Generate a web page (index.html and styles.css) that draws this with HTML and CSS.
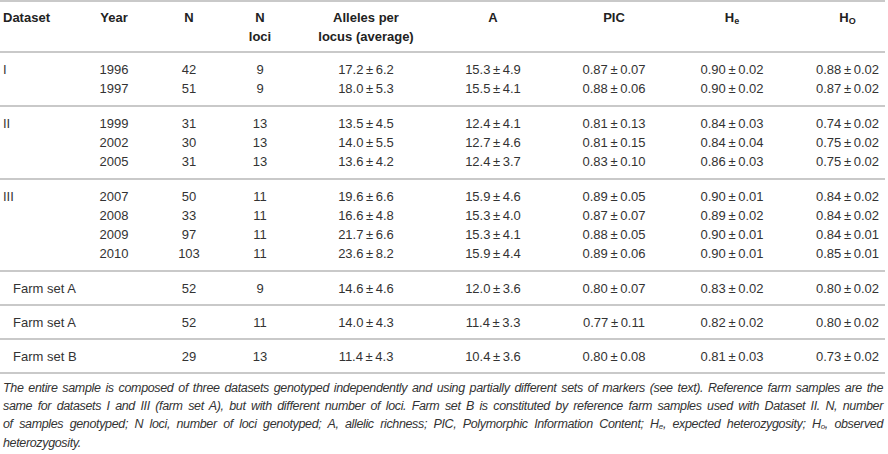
FILE: index.html
```html
<!DOCTYPE html>
<html lang="en">
<head>
    <meta charset="UTF-8">
    <title>Genetic diversity by dataset</title>
    <link rel="stylesheet" href="styles.css">
</head>
<body>
    <div class="table-wrap">
        <table class="data-table">
            <colgroup>
                <col class="c-dataset">
                <col class="c-year">
                <col class="c-n">
                <col class="c-loci">
                <col class="c-alleles">
                <col class="c-a">
                <col class="c-pic">
                <col class="c-he">
                <col class="c-ho">
            </colgroup>
            <thead>
                <tr>
                    <th class="left">Dataset</th>
                    <th>Year</th>
                    <th>N</th>
                    <th>N<br>loci</th>
                    <th>Alleles per<br>locus (average)</th>
                    <th>A</th>
                    <th>PIC</th>
                    <th>H<sub>e</sub></th>
                    <th class="last">H<sub>O</sub></th>
                </tr>
            </thead>

            <!-- Dataset I -->
            <tbody class="group">
                <tr><td class="left">I</td><td>1996</td><td>42</td><td>9</td><td>17.2&thinsp;±&thinsp;6.2</td><td>15.3&thinsp;±&thinsp;4.9</td><td>0.87&thinsp;±&thinsp;0.07</td><td>0.90&thinsp;±&thinsp;0.02</td><td class="last">0.88&thinsp;±&thinsp;0.02</td></tr>
                <tr><td></td><td>1997</td><td>51</td><td>9</td><td>18.0&thinsp;±&thinsp;5.3</td><td>15.5&thinsp;±&thinsp;4.1</td><td>0.88&thinsp;±&thinsp;0.06</td><td>0.90&thinsp;±&thinsp;0.02</td><td class="last">0.87&thinsp;±&thinsp;0.02</td></tr>
            </tbody>

            <!-- Dataset II -->
            <tbody class="group">
                <tr><td class="left">II</td><td>1999</td><td>31</td><td>13</td><td>13.5&thinsp;±&thinsp;4.5</td><td>12.4&thinsp;±&thinsp;4.1</td><td>0.81&thinsp;±&thinsp;0.13</td><td>0.84&thinsp;±&thinsp;0.03</td><td class="last">0.74&thinsp;±&thinsp;0.02</td></tr>
                <tr><td></td><td>2002</td><td>30</td><td>13</td><td>14.0&thinsp;±&thinsp;5.5</td><td>12.7&thinsp;±&thinsp;4.6</td><td>0.81&thinsp;±&thinsp;0.15</td><td>0.84&thinsp;±&thinsp;0.04</td><td class="last">0.75&thinsp;±&thinsp;0.02</td></tr>
                <tr><td></td><td>2005</td><td>31</td><td>13</td><td>13.6&thinsp;±&thinsp;4.2</td><td>12.4&thinsp;±&thinsp;3.7</td><td>0.83&thinsp;±&thinsp;0.10</td><td>0.86&thinsp;±&thinsp;0.03</td><td class="last">0.75&thinsp;±&thinsp;0.02</td></tr>
            </tbody>

            <!-- Dataset III -->
            <tbody class="group">
                <tr><td class="left">III</td><td>2007</td><td>50</td><td>11</td><td>19.6&thinsp;±&thinsp;6.6</td><td>15.9&thinsp;±&thinsp;4.6</td><td>0.89&thinsp;±&thinsp;0.05</td><td>0.90&thinsp;±&thinsp;0.01</td><td class="last">0.84&thinsp;±&thinsp;0.02</td></tr>
                <tr><td></td><td>2008</td><td>33</td><td>11</td><td>16.6&thinsp;±&thinsp;4.8</td><td>15.3&thinsp;±&thinsp;4.0</td><td>0.87&thinsp;±&thinsp;0.07</td><td>0.89&thinsp;±&thinsp;0.02</td><td class="last">0.84&thinsp;±&thinsp;0.02</td></tr>
                <tr><td></td><td>2009</td><td>97</td><td>11</td><td>21.7&thinsp;±&thinsp;6.6</td><td>15.3&thinsp;±&thinsp;4.1</td><td>0.88&thinsp;±&thinsp;0.05</td><td>0.90&thinsp;±&thinsp;0.01</td><td class="last">0.84&thinsp;±&thinsp;0.01</td></tr>
                <tr><td></td><td>2010</td><td>103</td><td>11</td><td>23.6&thinsp;±&thinsp;8.2</td><td>15.9&thinsp;±&thinsp;4.4</td><td>0.89&thinsp;±&thinsp;0.06</td><td>0.90&thinsp;±&thinsp;0.01</td><td class="last">0.85&thinsp;±&thinsp;0.01</td></tr>
            </tbody>

            <!-- Reference farm samples -->
            <tbody class="farm">
                <tr><td class="farm-name" colspan="2">Farm set A</td><td>52</td><td>9</td><td>14.6&thinsp;±&thinsp;4.6</td><td>12.0&thinsp;±&thinsp;3.6</td><td>0.80&thinsp;±&thinsp;0.07</td><td>0.83&thinsp;±&thinsp;0.02</td><td class="last">0.80&thinsp;±&thinsp;0.02</td></tr>
            </tbody>
            <tbody class="farm">
                <tr><td class="farm-name" colspan="2">Farm set A</td><td>52</td><td>11</td><td>14.0&thinsp;±&thinsp;4.3</td><td>11.4&thinsp;±&thinsp;3.3</td><td>0.77&thinsp;±&thinsp;0.11</td><td>0.82&thinsp;±&thinsp;0.02</td><td class="last">0.80&thinsp;±&thinsp;0.02</td></tr>
            </tbody>
            <tbody class="farm">
                <tr><td class="farm-name" colspan="2">Farm set B</td><td>29</td><td>13</td><td>11.4&thinsp;±&thinsp;4.3</td><td>10.4&thinsp;±&thinsp;3.6</td><td>0.80&thinsp;±&thinsp;0.08</td><td>0.81&thinsp;±&thinsp;0.03</td><td class="last">0.73&thinsp;±&thinsp;0.02</td></tr>
            </tbody>
        </table>

        <!-- Table footnote, one block per printed line -->
        <p class="caption">
            <span class="cap-line">The entire sample is composed of three datasets genotyped independently and using partially different sets of markers (see text). Reference farm samples are the</span>
            <span class="cap-line">same for datasets I and III (farm set A), but with different number of loci. Farm set B is constituted by reference farm samples used with Dataset II. N, number</span>
            <span class="cap-line">of samples genotyped; N loci, number of loci genotyped; A, allelic richness; PIC, Polymorphic Information Content; H<sub>e</sub>, expected heterozygosity; H<sub>o</sub>, observed</span>
            <span class="cap-line cap-last">heterozygosity.</span>
        </p>
    </div>
</body>
</html>
```

FILE: styles.css
```css
/* General Reset */
* {
    margin: 0;
    padding: 0;
    box-sizing: border-box;
}

body {
    background-color: #fff;
    font-family: "Liberation Sans", Arial, sans-serif;
    color: #333;
}

.table-wrap {
    width: 885px;
}

/* Table */
.data-table {
    width: 885px;
    table-layout: fixed;
    border-collapse: collapse;
    font-size: 13px;
    line-height: 19px;
    border-top: 2px solid #c9c9c9;
}

.c-dataset { width: 80px; }
.c-year    { width: 68px; }
.c-n       { width: 82px; }
.c-loci    { width: 60px; }
.c-alleles { width: 152px; }
.c-a       { width: 102px; }
.c-pic     { width: 140px; }
.c-he      { width: 96px; }
.c-ho      { width: 105px; }

.data-table th,
.data-table td {
    text-align: center;
    white-space: nowrap;
}

.data-table th {
    font-weight: bold;
    color: #222;
    vertical-align: top;
    padding: 6px 0 5px;
    border-bottom: 2px solid #c9c9c9;
}

.data-table .left {
    text-align: left;
    padding-left: 3px;
}

.data-table .last {
    padding-left: 30px;
}

sub {
    font-size: 9px;
    line-height: 0;
    vertical-align: -2px;
}

/* Row groups */
.group {
    border-bottom: 2px solid #c9c9c9;
}

.group tr:first-child td {
    padding-top: 7px;
}

.group tr:last-child td {
    padding-bottom: 7px;
}

.farm {
    border-bottom: 2px solid #c9c9c9;
}

.farm td {
    padding: 6.5px 0;
}

.farm .farm-name {
    text-align: left;
    padding-left: 13px;
}

/* Caption */
.caption {
    margin-top: 4.5px;
    padding: 0 2px 0 3px;
    font-size: 12.5px;
    letter-spacing: -0.35px;
    line-height: 18.4px;
    font-style: italic;
}

.cap-line {
    display: block;
    white-space: nowrap;
    text-align: justify;
    text-align-last: justify;
}

.cap-line.cap-last {
    text-align-last: left;
}

.caption sub {
    font-size: 8px;
    vertical-align: -1px;
}
```
